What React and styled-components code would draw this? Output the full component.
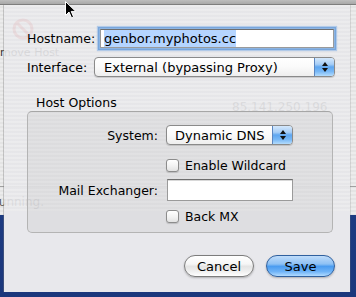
import React from "react";
import styled, { createGlobalStyle } from "styled-components";

const GlobalStyle = createGlobalStyle`
  html, body { margin: 0; padding: 0; }
  body { font-family: "DejaVu Sans", "Liberation Sans", sans-serif; }
`;

const FONT = `"DejaVu Sans", "Liberation Sans", sans-serif`;

const Desktop = styled.div`
  position: relative;
  width: 356px;
  height: 297px;
  overflow: hidden;
  background: linear-gradient(180deg, #23458f 0%, #1b377c 100%);
  font-family: ${FONT};
`;

const BackWindow = styled.div`
  position: absolute;
  left: 0;
  top: 0;
  width: 356px;
  height: 215px;
  background: repeating-linear-gradient(180deg, #ececec 0 2px, #e4e4e4 2px 4px);
`;

const TitleBar = styled.div`
  height: 4px;
  background: linear-gradient(180deg, #bdbdbd, #a8a8a8);
  border-bottom: 1px solid #7d7d7d;
`;

const Ghost = styled.div`
  position: absolute;
  left: ${(p) => p.$x}px;
  top: ${(p) => p.$y}px;
  font-size: ${(p) => p.$size || 12}px;
  line-height: 1;
  color: ${(p) => p.$color || "#555"};
  white-space: nowrap;
`;

const Separator = styled.div`
  position: absolute;
  left: 0;
  top: 186px;
  width: 356px;
  height: 1px;
  background: #a0a0a0;
`;

const Sheet = styled.div`
  position: absolute;
  left: 4px;
  top: 5px;
  width: 346px;
  height: 287px;
  box-sizing: border-box;
  padding: 24px 15px 0 23px;
  display: flex;
  flex-direction: column;
  background:
    linear-gradient(180deg, transparent 0 206px, #e8e8ec 206px),
    repeating-linear-gradient(
      180deg,
      rgba(236, 236, 238, 0.9) 0 2px,
      rgba(230, 230, 233, 0.9) 2px 4px
    );
  box-shadow: -1px 0 0 rgba(120, 120, 120, 0.35), 1px 0 0 rgba(120, 120, 120, 0.2);
`;

const Row = styled.div`
  display: flex;
  align-items: center;
  margin-top: ${(p) => p.$mt || 0}px;
`;

const Label = styled.div`
  width: ${(p) => p.$w}px;
  flex: none;
  font-size: 12.5px;
  color: #000;
  white-space: nowrap;
`;

const TextField = styled.div`
  box-sizing: border-box;
  width: ${(p) => p.$w}px;
  height: ${(p) => p.$h || 19}px;
  margin-left: ${(p) => p.$ml || 0}px;
  background: #fff;
  border: 1px solid #9a9a9a;
  border-top-color: #6e6e6e;
  display: flex;
  align-items: center;
  padding-left: 3px;
  font-size: 13px;
  color: #000;
  box-shadow: ${(p) =>
    p.$focus
      ? "0 0 0 1px #8cb4e2, 0 0 0 2px #78a6dc, 0 0 1px 3px rgba(140, 180, 228, 0.6)"
      : "inset 0 1px 0 #d8d8d8"};
`;

const Selection = styled.span`
  background: #b5d5ff;
  padding: 1px 0;
`;

const Popup = styled.div`
  box-sizing: border-box;
  width: ${(p) => p.$w}px;
  height: 20px;
  display: flex;
  border: 1px solid #8a8a8a;
  border-radius: 4px;
  overflow: hidden;
  background: linear-gradient(180deg, #ffffff 0%, #fafafa 50%, #eeeeee 100%);
  box-shadow: 0 1px 1px rgba(0, 0, 0, 0.15);
`;

const PopupText = styled.div`
  flex: 1;
  display: flex;
  align-items: center;
  padding-left: ${(p) => p.$pl || 8}px;
  font-size: 13px;
  color: #000;
  white-space: nowrap;
`;

const PopupArrows = styled.div`
  width: 19px;
  flex: none;
  display: flex;
  flex-direction: column;
  align-items: center;
  justify-content: center;
  gap: 2px;
  border-left: 1px solid #5b86c0;
  background: linear-gradient(
    180deg,
    #d4e8fc 0%,
    #a6cdf6 35%,
    #5ea6f0 50%,
    #78b8f6 75%,
    #b4dcfd 100%
  );
`;

const Tri = styled.div`
  width: 0;
  height: 0;
  border-left: 3px solid transparent;
  border-right: 3px solid transparent;
  ${(p) =>
    p.$up ? "border-bottom: 4px solid #111;" : "border-top: 4px solid #111;"}
`;

const SectionTitle = styled.div`
  margin: 19px 0 1px 9px;
  font-size: 12.5px;
  line-height: 14px;
  color: #000;
`;

const GroupBox = styled.div`
  box-sizing: border-box;
  height: 122px;
  margin-right: 2px;
  border: 1px solid #b4b4b4;
  border-top-color: #a6a6a6;
  border-radius: 5px;
  background: rgba(0, 0, 0, 0.045);
  padding-top: 13px;
  display: flex;
  flex-direction: column;
`;

const FormRow = styled.div`
  display: grid;
  grid-template-columns: 130px auto;
  column-gap: 8px;
  align-items: center;
  margin-top: ${(p) => p.$mt || 0}px;
`;

const FormLabel = styled.div`
  text-align: right;
  font-size: 12.5px;
  color: #000;
  white-space: nowrap;
`;

const CheckWrap = styled.label`
  display: flex;
  align-items: center;
  gap: 6px;
  font-size: 12.5px;
  height: 14px;
  color: #000;
  white-space: nowrap;
`;

const CheckBox = styled.span`
  box-sizing: border-box;
  width: 13px;
  height: 13px;
  border: 1px solid #8c8c8c;
  border-radius: 3px;
  background: linear-gradient(180deg, #ffffff 0%, #f2f2f2 55%, #e2e2e2 100%);
  box-shadow: 0 1px 1px rgba(0, 0, 0, 0.15);
`;

const Buttons = styled.div`
  display: flex;
  justify-content: flex-end;
  gap: 12px;
  margin-top: 22px;
`;

const Button = styled.div`
  box-sizing: border-box;
  width: ${(p) => p.$w}px;
  height: 22px;
  border-radius: 11px;
  display: flex;
  align-items: center;
  justify-content: center;
  font-size: 13px;
  color: #000;
  border: 1px solid ${(p) => (p.$primary ? "#30609e" : "#7c7c7c")};
  background: ${(p) =>
    p.$primary
      ? "linear-gradient(180deg, #bfdcfa 0%, #8ec1f4 40%, #4b9cf0 52%, #6fb3f7 78%, #b1dbff 100%)"
      : "linear-gradient(180deg, #ffffff 0%, #f6f6f6 40%, #e4e4e4 52%, #f0f0f0 78%, #ffffff 100%)"};
  box-shadow: 0 1px 2px rgba(0, 0, 0, 0.25);
`;

const CursorSvg = styled.svg`
  position: absolute;
  left: 65px;
  top: 1px;
`;

function NoSign() {
  return (
    <svg width="22" height="22" viewBox="0 0 22 22">
      <circle cx="11" cy="11" r="9" fill="none" stroke="#d54848" strokeWidth="3" />
      <line x1="4.5" y1="4.5" x2="17.5" y2="17.5" stroke="#d54848" strokeWidth="3" />
    </svg>
  );
}

export default function App() {
  return (
    <>
      <GlobalStyle />
      <Desktop>
        <BackWindow>
          <TitleBar />
          <Ghost $x={12} $y={18}>
            <NoSign />
          </Ghost>
          <Ghost $x={-14} $y={47} $size={11} $color="#333">
            Remove Host
          </Ghost>
          <Ghost $x={232} $y={101} $size={12} $color="#444">
            85.141.250.196
          </Ghost>
          <Separator />
          <Ghost $x={-9} $y={196} $size={12} $color="#555">
            Running.
          </Ghost>
        </BackWindow>

        <Sheet>
          <Row>
            <Label $w={73}>Hostname:</Label>
            <TextField $w={234} $focus>
              <Selection>genbor.myphotos.cc</Selection>
            </TextField>
          </Row>
          <Row $mt={9}>
            <Label $w={67}>Interface:</Label>
            <Popup $w={241}>
              <PopupText $pl={9}>External (bypassing Proxy)</PopupText>
              <PopupArrows>
                <Tri $up />
                <Tri />
              </PopupArrows>
            </Popup>
          </Row>

          <SectionTitle>Host Options</SectionTitle>
          <GroupBox>
            <FormRow>
              <FormLabel>System:</FormLabel>
              <Popup $w={127}>
                <PopupText>Dynamic DNS</PopupText>
                <PopupArrows>
                  <Tri $up />
                  <Tri />
                </PopupArrows>
              </Popup>
            </FormRow>
            <FormRow $mt={13}>
              <span />
              <CheckWrap>
                <CheckBox />
                Enable Wildcard
              </CheckWrap>
            </FormRow>
            <FormRow $mt={7}>
              <FormLabel>Mail Exchanger:</FormLabel>
              <TextField $w={126} $h={22} $ml={1} />
            </FormRow>
            <FormRow $mt={8}>
              <span />
              <CheckWrap>
                <CheckBox />
                Back MX
              </CheckWrap>
            </FormRow>
          </GroupBox>

          <Buttons>
            <Button $w={70}>Cancel</Button>
            <Button $w={69} $primary>
              Save
            </Button>
          </Buttons>
        </Sheet>

        <CursorSvg width="12" height="18" viewBox="0 0 12 18">
          <path
            d="M0.5 0.5 L0.5 14.5 L4 11 L6.5 16.8 L8.6 15.9 L6.2 10.4 L10.8 10.4 Z"
            fill="#000"
            stroke="#fff"
            strokeWidth="1"
          />
        </CursorSvg>
      </Desktop>
    </>
  );
}
